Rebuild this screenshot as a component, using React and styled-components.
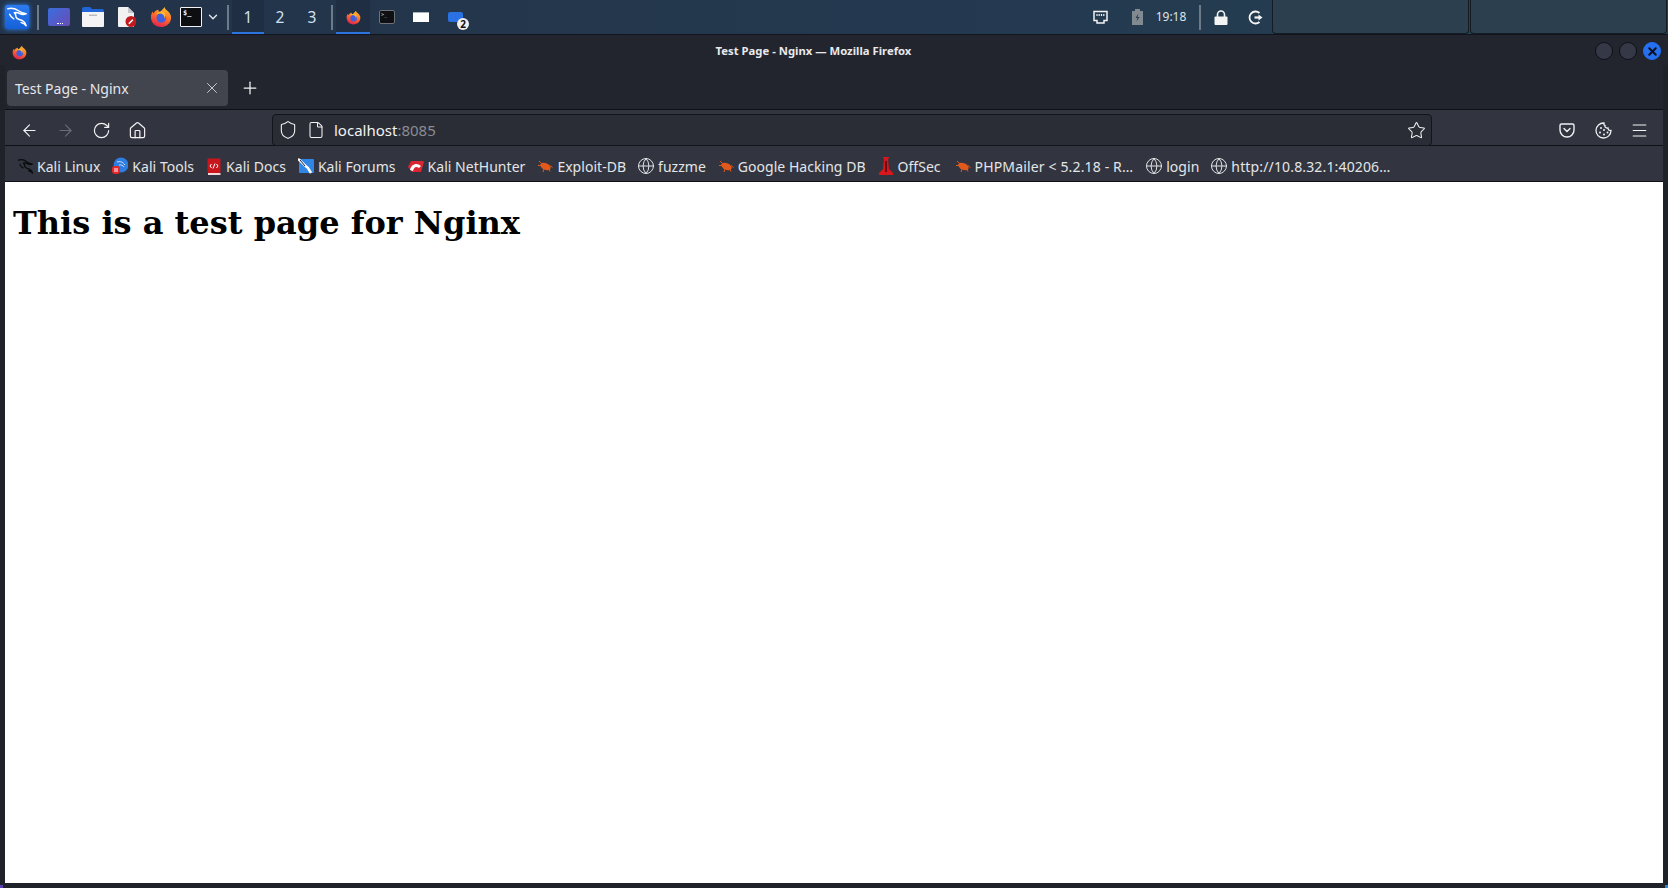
import React from 'react'
import styled, { createGlobalStyle } from 'styled-components'
import { ArrowLeft, ArrowRight, RotateCw, Home, Star, Menu, X, Plus, ChevronDown, Shield, File, Globe } from 'lucide-react'

const GlobalStyle = createGlobalStyle`
    html, body {
        margin: 0;
        padding: 0;
        width: 1668px;
        height: 888px;
        overflow: hidden;
        background: #1f2229;
    }
`

const Firefox = ({ size, id }) => (
    <svg width={size} height={size} viewBox="0 0 24 24">
        <defs>
            <linearGradient id={id} x1="0.700" y1="0" x2="0.300" y2="1">
                <stop offset="0" stopColor="#ffc02e" />
                <stop offset="0.5" stopColor="#ff6a2b" />
                <stop offset="1" stopColor="#e0204f" />
            </linearGradient>
        </defs>
        <path d="M12 23C5.800 23 1 18.200 1 12.300 1 9.800 1.800 7.500 3 6l.6 2.200C5 5.700 7.300 4.300 9.500 4.200 9 5.500 9.500 6.500 10.600 7.100 12 5.500 13.700 3.500 16 1c.2 2 1.500 2.800 3 4.300 2.500 2.300 4 4.500 4 7.200C23 18.300 18.200 23 12 23z" fill={`url(#${id})`} />
        <circle cx="12.300" cy="13" r="5.200" fill="#3f5fe0" />
        <path d="M6 9.500c2-1.500 4.500-1.800 6.500-1 2.500 1 3.500 3 3.300 5.500 1.700-2.200 1.500-5.500-.6-7.500C12.500 5 8.500 6 6 9.500z" fill="#ffb52e" />
    </svg>
)

const KaliMark = ({ size, color, weight }) => (
    <svg width={size} height={size} viewBox="0 0 24 24" fill="none" stroke={color} strokeWidth={weight} strokeLinecap="round" strokeLinejoin="round">
        <path d="M2 3c5-1.500 9 0 12 2.500 2.500 2 4.500 2.500 8 3-2.500 1-5 .8-7-.3-2-1-4-1.500-6-1 2 1.500 1.500 3.500 2 5 .8 2.500 4.500 2.500 7 3.800 2 1 3.500 3 4 5.500-1.300-1.700-3-3-5.500-3.500" />
        <path d="M4 9c1 2.500 2.500 4 4.500 5" />
    </svg>
)

const FlameBug = () => (
    <svg width="16" height="16" viewBox="0 0 16 16">
        <ellipse cx="8.500" cy="8.500" rx="5.500" ry="3.300" fill="#e2591c" transform="rotate(25 8.500 8.500)" />
        <path d="M2 3l3 3M1 7.500l3 0M7 11l-1 3M12 11l1 2.500M13 7.500l2.500 2" stroke="#e2591c" strokeWidth="1" />
    </svg>
)

const ToolsIcon = () => (
    <svg width="16" height="18" viewBox="0 0 16 18">
        <circle cx="9" cy="8" r="7.500" fill="#2d7ee0" />
        <path d="M5 5c3-1 6 0 8 3M7 8c2-.5 4 .3 5 2" stroke="#cfe4ff" strokeWidth="1" fill="none" />
        <rect x="0" y="9" width="8" height="8" rx="3" fill="#e8262a" />
        <path d="M3 11v4M5 11v4" stroke="#fff" strokeWidth="1" />
    </svg>
)

const DocsIcon = () => (
    <svg width="14" height="17" viewBox="0 0 14 17">
        <rect x="0.500" y="0.500" width="13" height="14.500" rx="1" fill="#c8161c" />
        <rect x="1" y="15" width="12.500" height="2" fill="#f1d9d9" />
        <path d="M4.500 6L3 8l1.500 2M9.500 6L11 8 9.500 10M8 5.500L6 10.500" stroke="#fff" strokeWidth="1" fill="none" />
    </svg>
)

const ForumsIcon = () => (
    <svg width="16" height="16" viewBox="0 0 16 16">
        <rect x="1" y="1" width="15" height="14" rx="1" fill="#2f86e6" />
        <path d="M0 1c3 2 6 6 10 9l3 5" stroke="#fff" strokeWidth="2.500" fill="none" />
        <path d="M2 2l5 6" stroke="#15213a" strokeWidth="1" />
    </svg>
)

const HunterIcon = () => (
    <svg width="16" height="16" viewBox="0 0 16 16">
        <path d="M3 3h12l1 1-3 10H4L0 9z" fill="#d92632" />
        <path d="M2 12C3 6 9 4 13 8l-2 2C8 8 6 9 5 13z" fill="#fff" />
    </svg>
)

const OffSecIcon = () => (
    <svg width="14" height="18" viewBox="0 0 14 18">
        <path d="M4 0h6v1l-1 1 1 10 4 4v2H0v-2l4-4 1-10-1-1z" fill="#d8161c" />
        <path d="M6.300 4h1.400v11H6.300z" fill="#3a0a0d" />
    </svg>
)

const bookmarks = [
    { label: 'Kali Linux', icon: <KaliMark size={17} color="#0a0b0e" weight={1.8} /> },
    { label: 'Kali Tools', icon: <ToolsIcon /> },
    { label: 'Kali Docs', icon: <DocsIcon /> },
    { label: 'Kali Forums', icon: <ForumsIcon /> },
    { label: 'Kali NetHunter', icon: <HunterIcon /> },
    { label: 'Exploit-DB', icon: <FlameBug /> },
    { label: 'fuzzme', icon: <Globe size={18} strokeWidth={1.3} /> },
    { label: 'Google Hacking DB', icon: <FlameBug /> },
    { label: 'OffSec', icon: <OffSecIcon /> },
    { label: 'PHPMailer < 5.2.18 - R…', icon: <FlameBug />, long: true, before: 2 },
    { label: 'login', icon: <Globe size={18} strokeWidth={1.3} />, before: 1 },
    { label: 'http://10.8.32.1:40206…', icon: <Globe size={18} strokeWidth={1.3} />, long: true },
]

const App = () => {
    return (
        <Screen>
            <GlobalStyle />
            <TaskBar>
                <Launchers>
                    <KaliButton><KaliMark size={22} color="#fff" weight={1.6} /></KaliButton>
                    <LauncherDivider />
                    <DesktopIcon />
                    <LauncherIcon $gap={14}>
                        <svg width="22" height="20" viewBox="0 0 22 20">
                            <path d="M0 2a2 2 0 0 1 2-2h6l2 2h10a2 2 0 0 1 2 2v2H0z" fill="#2166d8" />
                            <path d="M0 5h22v14a1 1 0 0 1-1 1H1a1 1 0 0 1-1-1z" fill="#f4f4f4" />
                            <path d="M7 7.500h8v1.500H7z" fill="#b9bcc0" />
                        </svg>
                    </LauncherIcon>
                    <LauncherIcon $gap={14}>
                        <svg width="18" height="20" viewBox="0 0 18 20">
                            <path d="M0 1a1 1 0 0 1 1-1h9l6 6v14H1a1 1 0 0 1-1-1z" fill="#f2f2f2" />
                            <path d="M10 0l6 6h-6z" fill="#c4c6c9" />
                            <circle cx="13" cy="14.500" r="5.500" fill="#c41a1f" />
                            <path d="M10.800 16.700l4-4" stroke="#fff" strokeWidth="1.600" />
                        </svg>
                    </LauncherIcon>
                    <LauncherIcon $gap={8}><Firefox size={22} id="ffLauncher" /></LauncherIcon>
                    <TerminalIcon>$_</TerminalIcon>
                    <ChevronSlot><ChevronDown size={14} strokeWidth={2.4} color="#e4e8ee" /></ChevronSlot>
                    <Divider />
                </Launchers>
                <Workspace $active>1</Workspace>
                <Workspace>2</Workspace>
                <Workspace>3</Workspace>
                <Divider />
                <TaskButton $active><Firefox size={15} id="ffTask" /></TaskButton>
                <TaskButton><MiniTerminal>&gt;_</MiniTerminal></TaskButton>
                <TaskButton><MiniWindow /></TaskButton>
                <TaskButton>
                    <MiniFolder />
                    <CountBadge>2</CountBadge>
                </TaskButton>
                <TrayArea>
                    <TrayIcon $width={56}>
                        <svg width="15" height="15" viewBox="0 0 15 15" fill="none" stroke="#f2f2f2" strokeWidth="1.500">
                            <path d="M1 1.500h13v9h-3v2.500H4v-2.500H1z" />
                            <path d="M4 4v2M6.200 4v2M8.500 4v2M10.800 4v2" strokeWidth="1.200" />
                        </svg>
                    </TrayIcon>
                    <TrayIcon $width={18}>
                        <svg width="11" height="16" viewBox="0 0 11 16">
                            <path d="M3 0h5v2h3v14H0V2h3z" fill="#808a90" />
                            <path d="M6.500 4.500L3.500 9h2l-1 3.500L7.500 8h-2z" fill="#2a3d50" />
                        </svg>
                    </TrayIcon>
                    <Clock>19:18</Clock>
                    <Divider />
                    <TrayIcon $width={34}>
                        <svg width="14" height="15" viewBox="0 0 14 15">
                            <path d="M3.500 7V4.500a3.500 3.500 0 0 1 7 0V7" fill="none" stroke="#f4f4f4" strokeWidth="1.600" />
                            <rect x="0.500" y="6.500" width="13" height="8.500" rx="1" fill="#f4f4f4" />
                        </svg>
                    </TrayIcon>
                    <TrayIcon $width={34}>
                        <svg width="15" height="15" viewBox="0 0 15 15" fill="none" stroke="#f4f4f4" strokeWidth="1.800">
                            <path d="M11.500 3a6 6 0 1 0 0 9" />
                            <path d="M6.500 7.500H11" strokeWidth="2.200" />
                            <path d="M10.500 4.500l4 3-4 3z" fill="#f4f4f4" stroke="none" />
                        </svg>
                    </TrayIcon>
                    <PanelSlot />
                    <PanelSlot />
                </TrayArea>
            </TaskBar>

            <BrowserWindow>
                <Corner $at="top: 0; left: 0;" $color="#2a78d8" />
                <Corner $at="top: 0; right: 0;" $color="#3f8f9c" />
                <Corner $at="bottom: 0; left: 0;" $color="#5a3fb8" />
                <Corner $at="bottom: 0; right: 0;" $color="#2f86d0" />
                <TitleBar>
                    <TitleIcon><Firefox size={15} id="ffTitle" /></TitleIcon>
                    <TitleText>Test Page - Nginx — Mozilla Firefox</TitleText>
                    <WindowControls>
                        <WindowDot />
                        <WindowDot />
                        <WindowDot $close><X size={13} strokeWidth={3.8} color="#0c1020" /></WindowDot>
                    </WindowControls>
                </TitleBar>

                <TabStrip>
                    <Tab>
                        <span>Test Page - Nginx</span>
                        <X size={18} strokeWidth={1.2} color="#d5d7dc" />
                    </Tab>
                    <NewTab><Plus size={20} strokeWidth={1.5} color="#f4f4f6" /></NewTab>
                </TabStrip>

                <NavBar>
                    <NavButton><ArrowLeft size={19} strokeWidth={1.4} /></NavButton>
                    <NavButton $disabled><ArrowRight size={19} strokeWidth={1.4} /></NavButton>
                    <NavButton><RotateCw size={19} strokeWidth={1.5} /></NavButton>
                    <NavButton><Home size={19} strokeWidth={1.5} /></NavButton>
                    <UrlBar>
                        <Shield size={20} strokeWidth={1.3} />
                        <File size={18} strokeWidth={1.4} />
                        <UrlText>localhost<UrlPort>:8085</UrlPort></UrlText>
                        <StarSlot><Star size={19} strokeWidth={1.3} /></StarSlot>
                    </UrlBar>
                    <ToolIcons>
                        <ToolIcon>
                            <svg width="16" height="16" viewBox="0 0 16 16" fill="none" stroke="#f0f0f3" strokeWidth="1.400">
                                <path d="M2.500 2h11A1.500 1.500 0 0 1 15 3.500V8A7 7 0 0 1 1 8V3.500A1.500 1.500 0 0 1 2.500 2z" />
                                <path d="M5 6.500l3 3 3-3" strokeLinecap="round" />
                            </svg>
                        </ToolIcon>
                        <ToolIcon>
                            <svg width="17" height="17" viewBox="0 0 17 17" fill="none" stroke="#f0f0f3" strokeWidth="1.300">
                                <path d="M9 1a7.500 7.500 0 1 0 7 7.500c-2 .3-3-1-3-2.500-2 .3-3.500-1-3-2.500-1-.2-1.200-1.500-1-2.500z" />
                                <circle cx="6" cy="6" r="1" fill="#f0f0f3" stroke="none" />
                                <circle cx="9" cy="8" r="1" fill="#f0f0f3" stroke="none" />
                                <circle cx="5" cy="10.500" r="1" fill="#f0f0f3" stroke="none" />
                                <circle cx="9" cy="12.500" r="1" fill="#f0f0f3" stroke="none" />
                                <circle cx="12.500" cy="10.500" r="1" fill="#f0f0f3" stroke="none" />
                            </svg>
                        </ToolIcon>
                        <ToolIcon><Menu size={19} strokeWidth={1.4} /></ToolIcon>
                    </ToolIcons>
                </NavBar>

                <BookmarkBar>
                    {bookmarks.map((b) => (
                        <Bookmark key={b.label} $long={b.long} $before={b.before}>
                            <BookmarkIcon>{b.icon}</BookmarkIcon>
                            <span>{b.label}</span>
                        </Bookmark>
                    ))}
                </BookmarkBar>

                <PageContent>
                    <Heading>This is a test page for Nginx</Heading>
                </PageContent>
            </BrowserWindow>
        </Screen>
    )
}

const Screen = styled.div`
    width: 1668px;
    height: 888px;
    display: flex;
    flex-direction: column;
    background: #1f2229;
    font-family: "Noto Sans", sans-serif;
`

const TaskBar = styled.header`
    height: 35px;
    box-sizing: border-box;
    flex: none;
    display: flex;
    align-items: stretch;
    background: linear-gradient(90deg, #233349 0%, #243a50 65%, #25404f 100%);
    border-bottom: 1px solid #11151d;
`

const Launchers = styled.div`
    display: flex;
    align-items: center;
    padding-left: 5px;
`

const KaliButton = styled.div`
    width: 24px;
    height: 24px;
    display: flex;
    align-items: center;
    justify-content: center;
    background: linear-gradient(180deg, #2c7cf0, #1560d8);
    border-radius: 2px;
    box-shadow: 0 0 5px #2f8cff;
`

const Divider = styled.div`
    width: 2px;
    height: 25px;
    margin: 0 3px;
    align-self: center;
    flex: none;
    background: #6d7a88;
`

const LauncherDivider = styled(Divider)`
    margin-left: 8px;
`

const DesktopIcon = styled.div`
    width: 22px;
    height: 18px;
    margin: 0 12px 0 6px;
    background: linear-gradient(135deg, #3a6ee0, #6a4cb4);
    border-radius: 2px;
    position: relative;
    &::after {
        content: "";
        position: absolute;
        left: 9px;
        bottom: 2px;
        width: 6px;
        height: 1px;
        border-bottom: 1px dotted #fff;
    }
`

const LauncherIcon = styled.div`
    display: flex;
    margin-right: ${(p) => p.$gap}px;
`

const TerminalIcon = styled.div`
    width: 22px;
    height: 20px;
    box-sizing: border-box;
    background: #0d0e11;
    border: 1px solid #f2f2f2;
    border-radius: 1px;
    color: #f2f2f2;
    font: bold 7px "DejaVu Sans Mono", monospace;
    padding: 1px 0 0 2px;
`

const ChevronSlot = styled.div`
    width: 22px;
    display: flex;
    justify-content: center;
`

const Workspace = styled.div`
    width: 32px;
    display: flex;
    align-items: center;
    justify-content: center;
    color: #cfe1f2;
    font-size: 15.5px;
    background: ${(p) => (p.$active ? '#1f2e42' : 'transparent')};
    box-shadow: ${(p) => (p.$active ? 'inset 0 -2px 0 #2e74e0' : 'none')};
`

const TaskButton = styled.div`
    width: 34px;
    position: relative;
    display: flex;
    align-items: center;
    justify-content: center;
    background: ${(p) => (p.$active ? '#1f2e42' : 'transparent')};
    box-shadow: ${(p) => (p.$active ? 'inset 0 -2px 0 #2e74e0' : 'none')};
`

const MiniTerminal = styled.div`
    width: 16px;
    height: 14px;
    box-sizing: border-box;
    background: #0e0f12;
    border: 1px solid #6f7378;
    border-radius: 2px;
    color: #ddd;
    font: 5px "DejaVu Sans Mono", monospace;
    padding-left: 1px;
`

const MiniWindow = styled.div`
    width: 16px;
    height: 9px;
    background: #fff;
    border-top: 1px solid #a8afb8;
`

const MiniFolder = styled.div`
    width: 15px;
    height: 10px;
    background: #2a72e4;
    border-radius: 2px;
`

const CountBadge = styled.div`
    position: absolute;
    right: 3px;
    bottom: 4px;
    width: 12px;
    height: 12px;
    border-radius: 50%;
    background: #efefef;
    color: #111;
    font: bold 10px/12px "Noto Sans", sans-serif;
    text-align: center;
`

const TrayArea = styled.div`
    margin-left: auto;
    display: flex;
    align-items: stretch;
`

const TrayIcon = styled.div`
    width: ${(p) => p.$width}px;
    display: flex;
    align-items: center;
    justify-content: center;
`

const Clock = styled.div`
    width: 50px;
    display: flex;
    align-items: center;
    justify-content: center;
    color: #dfe4ea;
    font-size: 12px;
    padding-bottom: 2px;
    box-sizing: border-box;
`

const PanelSlot = styled.div`
    width: 197px;
    margin-right: 1px;
    background: #2c3f4e;
    border: 1px solid #141b22;
    border-top: none;
    border-radius: 0 0 4px 4px;
    box-sizing: border-box;
`

const BrowserWindow = styled.main`
    flex: 1;
    min-height: 0;
    position: relative;
    display: flex;
    flex-direction: column;
    padding: 0 5px 5px;
    background: #1f2229;
`

const Corner = styled.div`
    position: absolute;
    width: 3px;
    height: 3px;
    background: ${(p) => p.$color};
    ${(p) => p.$at}
`

const TitleBar = styled.div`
    height: 30px;
    flex: none;
    display: flex;
    align-items: center;
    justify-content: center;
    position: relative;
    background: #22252e;
    margin: 0 -5px;
`

const TitleIcon = styled.div`
    position: absolute;
    left: 12px;
    top: 8px;
`

const TitleText = styled.div`
    color: #e8e9ec;
    font-size: 11.3px;
    font-weight: 700;
    margin-left: -41px;
`

const WindowControls = styled.div`
    position: absolute;
    right: 7px;
    top: 7px;
    display: flex;
    gap: 6px;
`

const WindowDot = styled.div`
    width: 18px;
    height: 18px;
    border-radius: 50%;
    box-sizing: border-box;
    display: flex;
    align-items: center;
    justify-content: center;
    background: ${(p) => (p.$close ? '#2470f0' : '#353947')};
    border: 1px solid ${(p) => (p.$close ? '#2470f0' : '#0f1118')};
`

const TabStrip = styled.div`
    height: 45px;
    flex: none;
    display: flex;
    align-items: flex-start;
    padding: 5px 0 0 2px;
    box-sizing: border-box;
    background: #22252e;
    border-bottom: 1px solid #0f1016;
`

const Tab = styled.div`
    width: 221px;
    height: 36px;
    box-sizing: border-box;
    padding: 0 7px 0 8px;
    display: flex;
    align-items: center;
    justify-content: space-between;
    background: #42454e;
    border-radius: 4px;
    color: #e6e7ea;
    font-size: 14px;
`

const NewTab = styled.div`
    width: 36px;
    height: 36px;
    margin-left: 4px;
    display: flex;
    align-items: center;
    justify-content: center;
`

const NavBar = styled.div`
    height: 36px;
    flex: none;
    box-sizing: border-box;
    display: flex;
    align-items: flex-end;
    padding: 0 0 0 6px;
    background: #32353f;
    border-bottom: 1px solid #0f1016;
    color: #f3f3f5;
`

const NavButton = styled.div`
    width: 36px;
    height: 32px;
    flex: none;
    margin-bottom: -1px;
    display: flex;
    align-items: center;
    justify-content: center;
    color: ${(p) => (p.$disabled ? '#6a6d75' : '#f3f3f5')};
`

const UrlBar = styled.div`
    width: 1160px;
    height: 32px;
    margin: 0 0 -1px 117px;
    flex: none;
    box-sizing: border-box;
    display: flex;
    align-items: center;
    gap: 9px;
    padding: 0 5px;
    background: #2a2c36;
    border: 1px solid #14151b;
    border-radius: 4px;
`

const UrlText = styled.div`
    color: #f2f3f5;
    font-size: 15px;
`

const UrlPort = styled.span`
    color: #8a8c93;
`

const StarSlot = styled.div`
    margin-left: auto;
    display: flex;
`

const ToolIcons = styled.div`
    margin: 0 0 -1px 117px;
    height: 32px;
    display: flex;
`

const ToolIcon = styled.div`
    width: 36px;
    display: flex;
    align-items: center;
    justify-content: center;
`

const BookmarkBar = styled.div`
    height: 36px;
    flex: none;
    display: flex;
    align-items: center;
    gap: 12px;
    padding: 5px 0 0 12px;
    box-sizing: border-box;
    background: #32353f;
    border-bottom: 1px solid #0f1016;
    color: #e4e5e8;
    font-size: 14px;
    letter-spacing: 0.030px;
    white-space: nowrap;
`

const Bookmark = styled.div`
    display: flex;
    align-items: center;
    gap: 4px;
    margin-left: ${(p) => p.$before || 0}px;
    letter-spacing: ${(p) => (p.$long ? '0.150px' : 'inherit')};
`

const BookmarkIcon = styled.div`
    width: 16px;
    height: 18px;
    display: flex;
    align-items: center;
    justify-content: center;
    & svg {
        flex: none;
    }
`

const PageContent = styled.div`
    flex: 1;
    min-height: 0;
    background: #fff;
    padding: 8px;
`

const Heading = styled.h1`
    margin: 14px 0;
    font-family: "DejaVu Serif", serif;
    font-size: 32px;
    font-weight: 700;
    color: #000;
`

export default App
